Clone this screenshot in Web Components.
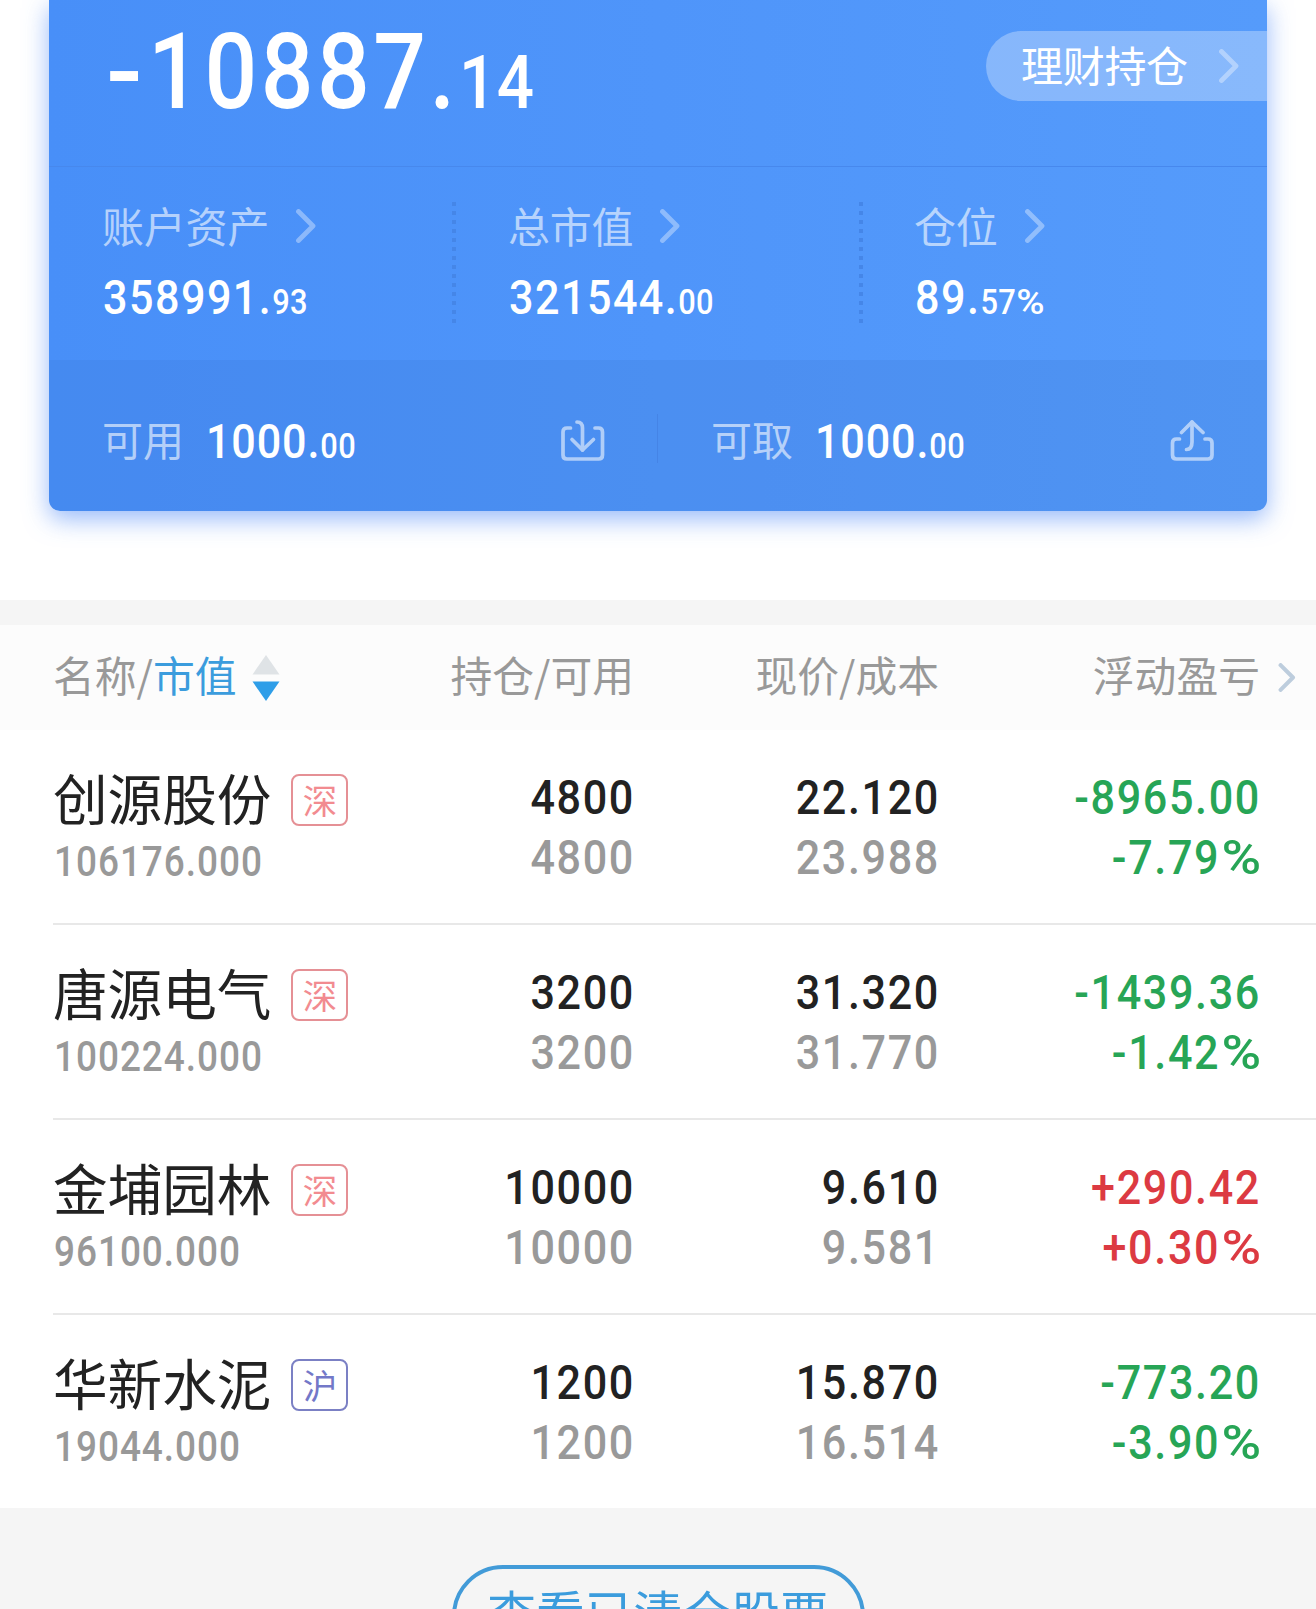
<!DOCTYPE html>
<html lang="zh-CN">
<head>
<meta charset="utf-8">
<title>持仓</title>
<style>
  html, body {
    margin: 0;
    height: 1609px;
    overflow: hidden;
    background: #fff;
  }
  body {
    font-family: "Noto Sans CJK SC", sans-serif;
  }
</style>
</head>
<body>
<holdings-page></holdings-page>

<script>
class BaseElement extends HTMLElement {
  constructor() {
    super();
    this.attachShadow({ mode: "open" });
  }

  connectedCallback() {
    this.shadowRoot.innerHTML = this.render();
  }
}

// Narrow figures: sign, integer part at full size, then the "small" attribute
class NumText extends BaseElement {
  render() {
    const small = (this.getAttribute("small") || "").replace("%", "<i>%</i>");
    return `
      <style>
        :host {
          display: block;
          font-family: Roboto, sans-serif;
          font-weight: 500;
          font-size: 49px;
          line-height: 62px;
          height: 60px;
          letter-spacing: 0.038em;
          white-space: nowrap;
        }
        div {
          transform: scaleX(0.88);
          transform-origin: left;
        }
        :host([end]) div {
          transform-origin: right;
          text-align: right;
        }
        span {
          font-size: var(--small-size, 35px);
          line-height: 1;
          letter-spacing: 0.01em;
        }
        i, ::slotted(i) {
          display: inline-block;
          font-style: normal;
          letter-spacing: 0;
          line-height: 1;
          transform: scaleX(1.25);
          transform-origin: right;
          margin-left: 0.21em;
        }
        i { transform-origin: left; margin-left: 0; }
      </style>
      <div><slot></slot>${small ? `<span>${small}</span>` : ""}</div>
    `;
  }
}

class ChevronIcon extends BaseElement {
  render() {
    return `
      <style>
        :host { display: block; width: 20px; height: 34px; }
        svg { display: block; width: 100%; height: 100%; }
      </style>
      <svg viewBox="0 0 20 34" fill="none" stroke="currentColor" stroke-width="4.8" stroke-linecap="round" stroke-linejoin="round">
        <path d="M2.500 2.500L17 17L2.500 31.500"/>
      </svg>
    `;
  }
}

class TransferIcon extends BaseElement {
  render() {
    const paths = {
      in: `<path d="M9.500 9H6Q2 9 2 13V36Q2 40 6 40H37.500Q41.500 40 41.500 36V13Q41.500 9 37.500 9H34"/>
           <path d="M16 3C20 3 21.500 5 21.500 9V31"/>
           <path d="M11 20.500L21.500 31L32.500 20.500"/>`,
      out: `<path d="M9.500 20H6.500Q2.500 20 2.500 24V36Q2.500 40 6.500 40H38Q42 40 42 36V24Q42 20 38 20H35"/>
            <path d="M22 3V23C22 28.500 20 30.500 16.500 30.500"/>
            <path d="M11.500 13.500L22 3L33 13.500"/>`
    };
    return `
      <style>
        :host { display: block; width: 44px; height: 44px; opacity: .56; }
        svg { display: block; overflow: visible; }
      </style>
      <svg width="44" height="44" viewBox="0 0 44 44" fill="none" stroke="currentColor" stroke-width="3.7" stroke-linecap="round" stroke-linejoin="round">${paths[this.getAttribute("type")]}</svg>
    `;
  }
}

class MetricCell extends BaseElement {
  render() {
    return `
      <style>
        :host {
          display: block;
          padding: 37px 0 0 53px;
        }
        .label {
          display: flex;
          align-items: center;
          height: 40px;
          line-height: 41px;
          font-size: 42px;
          letter-spacing: -0.2px;
          color: rgba(255,255,255,.6);
        }
        chevron-icon {
          margin: 3px 0 0 27px;
          color: rgba(255,255,255,.36);
        }
        num-text { margin: 23px 0 0 1px; letter-spacing: 0.034em; }
      </style>
      <div class="label">${this.getAttribute("label")}<chevron-icon></chevron-icon></div>
      <num-text small="${this.getAttribute("small")}">${this.getAttribute("value")}</num-text>
    `;
  }
}

class CashCell extends BaseElement {
  render() {
    return `
      <style>
        :host {
          display: flex;
          align-items: center;
          height: 60px;
          padding: 0 53px 0 53px;
        }
        .label {
          font-size: 41px;
          line-height: 60px;
          margin: -7px 22px 0 0;
          color: rgba(255,255,255,.6);
        }
        num-text { flex: 1; letter-spacing: 0.02em; }
      </style>
      <span class="label">${this.getAttribute("label")}</span>
      <num-text small="00">1000.</num-text>
      <transfer-icon type="${this.getAttribute("icon")}"></transfer-icon>
    `;
  }
}

class AssetCard extends BaseElement {
  render() {
    return `
      <style>
        :host {
          display: block;
          height: 511px;
          margin: 0 49px;
          color: #fff;
          border-radius: 0 0 11px 11px;
          background: linear-gradient(90deg, #488ff8, #4f95fa 50%, #559bfb);
          box-shadow: 0 8px 24px rgba(72,132,246,.56);
        }
        .hero {
          display: flex;
          justify-content: space-between;
          align-items: flex-start;
          height: 166px;
          border-bottom: 1px solid #4788ed;
          padding-left: 57px;
        }
        .hero num-text {
          font-size: 105.5px;
          line-height: 144px;
          --small-size: 74.5px;
        }
        .sign {
          display: inline-block;
          line-height: 1;
          letter-spacing: 0;
          transform: scaleX(1.16);
          transform-origin: left;
          margin-right: 12px;
        }
        .pill {
          display: flex;
          align-items: center;
          box-sizing: border-box;
          width: 281px;
          height: 70px;
          margin-top: 31px;
          padding-left: 35px;
          border-radius: 35px 0 0 35px;
          background: rgba(255,255,255,.3);
          font-size: 42px;
          letter-spacing: -0.3px;
          line-height: 66px;
        }
        .pill span { margin-top: -4px; }
        .pill chevron-icon {
          margin-left: 31px;
          color: rgba(255,255,255,.36);
        }
        .metrics {
          --dots: repeating-linear-gradient(#4586e8 0 4px, transparent 4px 9px);
          display: grid;
          grid-template-columns: repeat(3, 1fr);
          height: 193px;
          background:
            no-repeat 403px 35px / 4px 122px var(--dots),
            no-repeat 810px 35px / 4px 122px var(--dots);
        }
        .cash {
          display: grid;
          grid-template-columns: 1fr 1fr;
          height: 100px;
          padding-top: 51px;
          border-radius: 0 0 11px 11px;
          background: rgba(58,110,200,.16);
        }
        .cash cash-cell:first-child {
          background: no-repeat right 3px / 1px 49px linear-gradient(#4584e6, #4584e6);
        }
      </style>
      <div class="hero">
        <num-text small="14"><span class="sign">-</span>10887.</num-text>
        <div class="pill"><span>理财持仓</span><chevron-icon></chevron-icon></div>
      </div>
      <div class="metrics">
        <metric-cell label="账户资产" value="358991." small="93"></metric-cell>
        <metric-cell label="总市值" value="321544." small="00"></metric-cell>
        <metric-cell label="仓位" value="89." small="57%"></metric-cell>
      </div>
      <div class="cash">
        <cash-cell label="可用" icon="in"></cash-cell>
        <cash-cell label="可取" icon="out"></cash-cell>
      </div>
    `;
  }
}

class TableHead extends BaseElement {
  render() {
    return `
      <style>
        :host {
          display: grid;
          grid-template-columns: 330px 251px 305px 321px 1fr;
          align-items: center;
          height: 105px;
          padding-left: 53px;
          background: #fcfcfc;
          color: #999;
          font-size: 41.8px;
          line-height: 60px;
        }
        span { text-align: right; margin-top: -8px; white-space: nowrap; }
        .name { display: flex; align-items: center; }
        b { font-weight: 400; color: #3b9cdd; }
        svg { margin-left: 15px; }
        chevron-icon {
          width: 18px;
          height: 29px;
          margin-left: 18px;
          color: #bdcddd;
        }
      </style>
      <div class="name">
        <span>名称/<b>市值</b></span>
        <svg width="28" height="46" viewBox="0 0 28 46">
          <path d="M14 0L27.500 19.500H.5z" fill="#dfe3e6"/>
          <path d="M.5 26.500H27.500L14 46z" fill="#2f9ee8"/>
        </svg>
      </div>
      <span>持仓/可用</span>
      <span>现价/成本</span>
      <span>浮动盈亏</span>
      <chevron-icon></chevron-icon>
    `;
  }
}

class StockRow extends BaseElement {
  render() {
    const get = (name) => this.getAttribute(name);
    const market = get("market");
    return `
      <style>
        :host {
          display: block;
          height: 193px;
          padding-left: 53px;
          color: #222;
        }
        .row {
          display: grid;
          grid-template-columns: 330px 252px 305px 321px;
          height: 156px;
          padding-top: 37px;
          border-bottom: 2px solid #e8e8e8;
        }
        :host(:last-of-type) .row { border-bottom: 0; }
        .name {
          display: flex;
          align-items: center;
          height: 60px;
          font-size: 54.6px;
          line-height: 64px;
        }
        .badge {
          box-sizing: border-box;
          width: 57px;
          height: 52px;
          margin: 6px 0 0 20px;
          border: 2px solid #e59095;
          border-radius: 8px;
          color: #f28b90;
          font-size: 34.5px;
          line-height: 46px;
          text-align: center;
        }
        .badge.sh { border-color: #7b80c4; color: #7378c8; }
        .total {
          font-size: 42px;
          line-height: 69px;
          letter-spacing: 0.026em;
          margin-left: 1px;
        }
        .sub { color: #999; }
        .up { color: #dc3a42; }
        .down { color: #27a556; }
      </style>
      <div class="row">
        <div>
          <div class="name">${get("name")}<div class="badge ${market === "沪" ? "sh" : ""}">${market}</div></div>
          <num-text class="total sub">${get("total")}</num-text>
        </div>
        <div>
          <num-text end>${get("held")}</num-text>
          <num-text end class="sub">${get("held")}</num-text>
        </div>
        <div>
          <num-text end>${get("price")}</num-text>
          <num-text end class="sub">${get("cost")}</num-text>
        </div>
        <div class="${get("profit").startsWith("+") ? "up" : "down"}">
          <num-text end>${get("profit")}</num-text>
          <num-text end>${get("rate").replace("%", "<i>%</i>")}</num-text>
        </div>
      </div>
    `;
  }
}

class OutlineButton extends BaseElement {
  render() {
    return `
      <style>
        :host {
          display: block;
          box-sizing: border-box;
          width: 413px;
          height: 102px;
          border: 4px solid #429bd8;
          border-radius: 51px;
          color: #3b9cdd;
          font-size: 48.8px;
          line-height: 83px;
          text-align: center;
          white-space: nowrap;
        }
      </style>
      <slot></slot>
    `;
  }
}

class HoldingsPage extends BaseElement {
  render() {
    return `
      <style>
        :host { display: block; height: 1609px; overflow: hidden; }
        .gap { height: 25px; margin-top: 89px; background: #f5f5f5; }
        stock-row { margin-bottom: 2px; }
        stock-row:last-of-type { margin-bottom: 0; }
        footer {
          display: flex;
          justify-content: center;
          height: 101px;
          padding-top: 57px;
          background: #f5f5f5;
        }
      </style>
      <asset-card></asset-card>
      <div class="gap"></div>
      <table-head></table-head>
      <stock-row name="创源股份" market="深" total="106176.000" held="4800" price="22.120" cost="23.988" profit="-8965.00" rate="-7.79%"></stock-row>
      <stock-row name="唐源电气" market="深" total="100224.000" held="3200" price="31.320" cost="31.770" profit="-1439.36" rate="-1.42%"></stock-row>
      <stock-row name="金埔园林" market="深" total="96100.000" held="10000" price="9.610" cost="9.581" profit="+290.42" rate="+0.30%"></stock-row>
      <stock-row name="华新水泥" market="沪" total="19044.000" held="1200" price="15.870" cost="16.514" profit="-773.20" rate="-3.90%"></stock-row>
      <footer><outline-button>查看已清仓股票</outline-button></footer>
    `;
  }
}

customElements.define("num-text", NumText);
customElements.define("chevron-icon", ChevronIcon);
customElements.define("transfer-icon", TransferIcon);
customElements.define("metric-cell", MetricCell);
customElements.define("cash-cell", CashCell);
customElements.define("asset-card", AssetCard);
customElements.define("table-head", TableHead);
customElements.define("stock-row", StockRow);
customElements.define("outline-button", OutlineButton);
customElements.define("holdings-page", HoldingsPage);
</script>
</body>
</html>
